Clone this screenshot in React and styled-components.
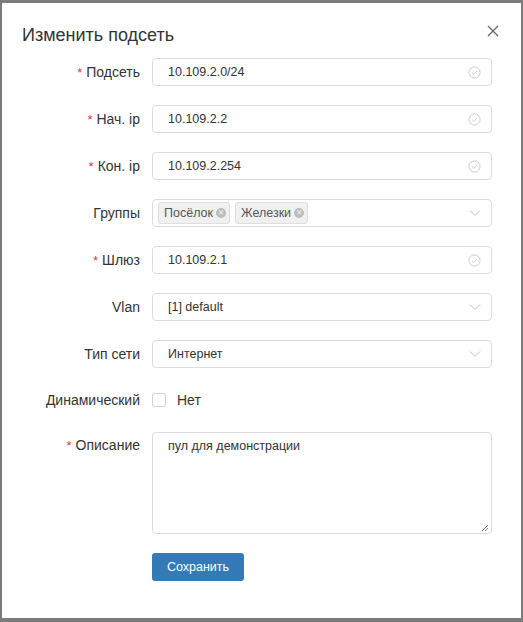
import React from 'react';
import styled, { createGlobalStyle } from 'styled-components';

const GlobalStyle = createGlobalStyle`
  html, body {
    margin: 0;
    padding: 0;
    background: #7b7b7b;
    font-family: 'Liberation Sans', Arial, sans-serif;
  }
`;

const fields = [
  { label: 'Подсеть', value: '10.109.2.0/24', required: true, kind: 'check' },
  { label: 'Нач. ip', value: '10.109.2.2', required: true, kind: 'check' },
  { label: 'Кон. ip', value: '10.109.2.254', required: true, kind: 'check' },
  { label: 'Группы', tags: ['Посёлок', 'Железки'], kind: 'select' },
  { label: 'Шлюз', value: '10.109.2.1', required: true, kind: 'check' },
  { label: 'Vlan', value: '[1] default', kind: 'select' },
  { label: 'Тип сети', value: 'Интернет', kind: 'select' },
];

function CheckIcon() {
  return (
    <svg width="13" height="13" viewBox="0 0 14 14" fill="none">
      <circle cx="7" cy="7" r="6" stroke="#c8c8c8" strokeWidth="1" />
      <path d="M4.3 7.2 L6.2 9 L9.8 5.3" stroke="#c8c8c8" strokeWidth="1" />
    </svg>
  );
}

function ArrowIcon() {
  return (
    <svg width="12" height="8" viewBox="0 0 12 8" fill="none">
      <path d="M1 1.5 L6 6.5 L11 1.5" stroke="#bfbfbf" strokeWidth="1" />
    </svg>
  );
}

export default function App() {
  return (
    <>
      <GlobalStyle />
      <Page>
        <Modal>
          <Header>
            <Title>Изменить подсеть</Title>
            <Close aria-label="close">
              <svg width="12" height="12" viewBox="0 0 12 12">
                <path d="M1 1 L11 11 M11 1 L1 11" stroke="#666" strokeWidth="1.3" />
              </svg>
            </Close>
          </Header>
          <Form>
            {fields.map((f) => (
              <Row key={f.label}>
                <Label>
                  {f.required && <Star>*</Star>}
                  {f.label}
                </Label>
                <Field $tags={!!f.tags}>
                  {f.tags ? (
                    <Tags>
                      {f.tags.map((t) => (
                        <Tag key={t}>
                          {t}
                          <TagX>×</TagX>
                        </Tag>
                      ))}
                    </Tags>
                  ) : (
                    <Value>{f.value}</Value>
                  )}
                  <Suffix>{f.kind === 'check' ? <CheckIcon /> : <ArrowIcon />}</Suffix>
                </Field>
              </Row>
            ))}
            <Row $short>
              <Label>Динамический</Label>
              <CheckLine>
                <Box />
                <span>Нет</span>
              </CheckLine>
            </Row>
            <Row $top>
              <Label $top>
                <Star>*</Star>Описание
              </Label>
              <TextArea>
                пул для демонстрации
                <Grip>
                  <svg width="8" height="8" viewBox="0 0 8 8">
                    <path d="M7 1 L1 7 M7 4 L4 7" stroke="#777" strokeWidth="1" />
                  </svg>
                </Grip>
              </TextArea>
            </Row>
            <Row>
              <Label />
              <Button>Сохранить</Button>
            </Row>
          </Form>
        </Modal>
      </Page>
    </>
  );
}

const Page = styled.div`
  width: 523px;
  height: 622px;
  padding: 3px 2px 4px 2px;
  box-sizing: border-box;
`;

const Modal = styled.div`
  background: #fff;
  height: 100%;
  box-sizing: border-box;
  padding: 0 0 0 20px;
`;

const Header = styled.div`
  display: flex;
  align-items: center;
  justify-content: space-between;
  height: 60px;
  padding-top: 4px;
  box-sizing: border-box;
  padding-right: 22px;
`;

const Title = styled.div`
  font-size: 18px;
  color: #333;
`;

const Close = styled.div`
  display: flex;
  margin-top: -8px;
`;

const Form = styled.div`
  display: flex;
  flex-direction: column;
  gap: 19px;
  padding-right: 29px;
  margin-top: -5px;
`;

const Row = styled.div`
  display: flex;
  align-items: ${(p) => (p.$top ? 'flex-start' : 'center')};
  gap: 12px;
  min-height: ${(p) => (p.$short ? '26px' : '28px')};
`;

const Label = styled.div`
  width: 118px;
  flex-shrink: 0;
  text-align: right;
  font-size: 14px;
  color: #333;
  padding-top: ${(p) => (p.$top ? '5px' : '0')};
`;

const Star = styled.span`
  color: #e0383e;
  margin-right: 4px;
  font-size: 13px;
`;

const Field = styled.div`
  flex: 1;
  height: 28px;
  box-sizing: border-box;
  border: 1px solid #dcdcdc;
  border-radius: 4px;
  display: flex;
  align-items: center;
  padding: 0 10px 0 ${(p) => (p.$tags ? '5px' : '15px')};
`;

const Value = styled.div`
  flex: 1;
  font-size: 12.5px;
  color: #333;
`;

const Suffix = styled.div`
  display: flex;
  align-items: center;
`;

const Tags = styled.div`
  flex: 1;
  display: flex;
  gap: 5px;
`;

const Tag = styled.div`
  display: flex;
  align-items: center;
  gap: 3px;
  height: 20px;
  padding: 0 3px 0 5px;
  background: #f0f0f0;
  border: 1px solid #dedede;
  border-radius: 3px;
  font-size: 12.5px;
  color: #555;
`;

const TagX = styled.span`
  width: 10px;
  height: 10px;
  border-radius: 50%;
  background: #bdbdbd;
  color: #f0f0f0;
  font-size: 10px;
  line-height: 10px;
  text-align: center;
`;

const CheckLine = styled.div`
  display: flex;
  align-items: center;
  gap: 11px;
  font-size: 14px;
  color: #333;
`;

const Box = styled.div`
  width: 12px;
  height: 12px;
  border: 1px solid #d6d6d6;
  border-radius: 2px;
`;

const TextArea = styled.div`
  flex: 1;
  height: 102px;
  box-sizing: border-box;
  border: 1px solid #dcdcdc;
  border-radius: 4px;
  padding: 6px 15px;
  font-size: 12.5px;
  color: #333;
  position: relative;
`;

const Grip = styled.div`
  position: absolute;
  right: 2px;
  bottom: 1px;
  display: flex;
`;

const Button = styled.div`
  background: #337ab7;
  color: #fff;
  font-size: 12.5px;
  height: 28px;
  width: 92px;
  border-radius: 3px;
  display: flex;
  align-items: center;
  justify-content: center;
`;
